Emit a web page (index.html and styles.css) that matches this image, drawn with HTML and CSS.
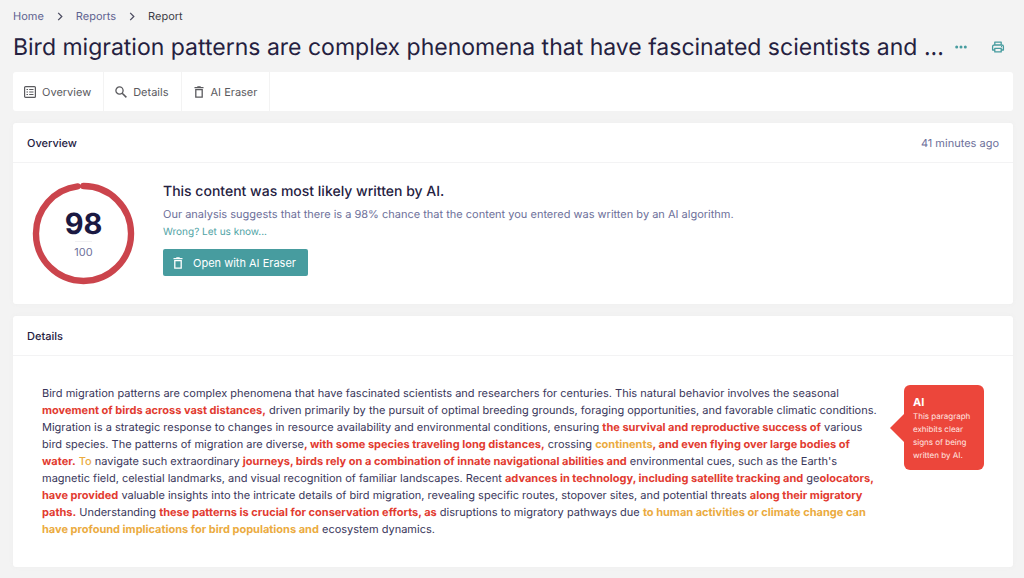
FILE: index.html
```html
<!DOCTYPE html>
<html lang="en">
<head>
<meta charset="utf-8">
<meta name="viewport" content="width=device-width, initial-scale=1">
<title>Report</title>
<link rel="stylesheet" href="styles.css">
</head>
<body>
<main class="page">
  <nav class="breadcrumb" aria-label="Breadcrumb">
    <a href="#">Home</a>
    <svg class="chevron" viewBox="0 0 6 10" aria-hidden="true"><path d="M1 1l4 4-4 4"/></svg>
    <a href="#">Reports</a>
    <svg class="chevron" viewBox="0 0 6 10" aria-hidden="true"><path d="M1 1l4 4-4 4"/></svg>
    <span class="current">Report</span>
  </nav>

  <header class="title-row">
    <h1 class="title">Bird migration patterns are complex phenomena that have fascinated scientists and ...</h1>
    <div class="actions">
      <button class="icon-button" type="button" aria-label="More">
        <svg width="14" height="14" viewBox="0 0 14 14" fill="currentColor"><circle cx="2.7" cy="7" r="1.5"/><circle cx="7" cy="7" r="1.5"/><circle cx="11.3" cy="7" r="1.5"/></svg>
      </button>
      <button class="icon-button" type="button" aria-label="Print">
        <svg width="14" height="14" viewBox="0 0 14 14" fill="none" stroke="currentColor" stroke-width="1.3" stroke-linejoin="round"><path d="M3.8 5V2.2h6.4V5M3.8 10H1.6V6.6Q1.6 5 3.2 5h7.6q1.6 0 1.6 1.6V10h-2.2M3.8 8.3h6.4v3.6H3.8z"/><path d="M10 6.7h1"/></svg>
      </button>
    </div>
  </header>

  <nav class="tabs" aria-label="Sections">
    <a class="tab" href="#overview">
      <svg class="tab-icon" viewBox="0 0 12 12" fill="none" stroke="currentColor"><rect x=".6" y=".6" width="10.8" height="10.8" rx="1" stroke-width="1.2"/><path d="M2.5 3.5H4M2.5 6H4M2.5 8.5H4M5.2 3.5h4.3M5.2 6h4.3M5.2 8.5h4.3" stroke-width="1.2"/></svg>
      Overview
    </a>
    <a class="tab" href="#details">
      <svg class="tab-icon" viewBox="0 0 12 12" fill="none" stroke="currentColor"><circle cx="4.5" cy="4.5" r="3.6" stroke-width="1.3"/><path d="M7.2 7.2l4.2 4.2" stroke-width="1.5"/></svg>
      Details
    </a>
    <a class="tab" href="#eraser">
      <svg class="tab-icon" viewBox="0 0 12 12" fill="none" stroke="currentColor" stroke-width="1.3"><path d="M1.5 1.6h9M4.3.9h3.4M2.8 3.6h6.4v7.6H2.8z"/></svg>
      AI Eraser
    </a>
  </nav>

  <section class="card" id="overview">
    <div class="card-head">
      <h2 class="card-title">Overview</h2>
      <span class="time">41 minutes ago</span>
    </div>
    <div class="overview">
      <div class="gauge">
        <svg class="ring" viewBox="0 0 104 104" aria-hidden="true">
          <circle cx="52" cy="52" r="48" fill="none" stroke="#cb444c" stroke-width="6.4" stroke-linecap="round" pathLength="100" stroke-dasharray="98 2" transform="rotate(-90 52 52)"/>
        </svg>
        <div class="score">
          <strong class="value">98</strong>
          <span class="rule"></span>
          <span class="total">100</span>
        </div>
      </div>
      <div class="verdict">
        <h3 class="verdict-title">This content was most likely written by AI.</h3>
        <p class="verdict-text">Our analysis suggests that there is a 98% chance that the content you entered was written by an AI algorithm.</p>
        <a class="feedback" href="#">Wrong? Let us know...</a>
        <button class="primary" type="button">
          <svg class="tab-icon" viewBox="0 0 12 12" fill="none" stroke="currentColor" stroke-width="1.3"><path d="M1.5 1.6h9M4.3.9h3.4M2.8 3.6h6.4v7.6H2.8z"/></svg>
          Open with AI Eraser
        </button>
      </div>
    </div>
  </section>

  <section class="card" id="details">
    <div class="card-head">
      <h2 class="card-title">Details</h2>
    </div>
    <div class="details">
      <p class="analysis">Bird migration patterns are complex phenomena that have fascinated scientists and researchers for centuries. This natural behavior involves the seasonal<br>
      <b class="ai">movement of birds across vast distances,</b> driven primarily by the pursuit of optimal breeding grounds, foraging opportunities, and favorable climatic conditions.<br>
      Migration is a strategic response to changes in resource availability and environmental conditions, ensuring <b class="ai">the survival and reproductive success of</b> various<br>
      bird species. The patterns of migration are diverse<b class="ai">, with some species traveling long distances,</b> crossing <b class="mixed">continents</b><b class="ai">, and even flying over large bodies of</b><br>
      <b class="ai">water.</b> <span class="mixed hint">To</span> navigate such extraordinary <b class="ai">journeys, birds rely on a combination of innate navigational abilities and</b> environmental cues, such as the Earth's<br>
      magnetic field, celestial landmarks, and visual recognition of familiar landscapes. Recent <b class="ai">advances in technology, including satellite tracking and</b> ge<b class="ai">olocators,</b><br>
      <b class="ai">have provided</b> valuable insights into the intricate details of bird migration, revealing specific routes, stopover sites, and potential threats <b class="ai">along their migratory</b><br>
      <b class="ai">paths.</b> Understanding <b class="ai">these patterns is crucial for conservation efforts, as</b> disruptions to migratory pathways due <b class="mixed">to human activities or climate change can</b><br>
      <b class="mixed">have profound implications for bird populations and</b> ecosystem dynamics.</p>
      <aside class="callout" role="tooltip">
        <strong class="callout-title">AI</strong>
        <p class="callout-text">This paragraph exhibits clear signs of being written by AI.</p>
      </aside>
    </div>
  </section>
</main>
</body>
</html>
```
FILE: styles.css
```css
* {
  box-sizing: border-box;
}

body {
  margin: 0;
  background: #f3f3f3;
  color: #25213f;
  font-family: Inter, "Liberation Sans", sans-serif;
  font-size: 11px;
  text-rendering: geometricPrecision;
}

h1, h2, h3, p {
  margin: 0;
}

a {
  color: inherit;
  text-decoration: none;
}

button {
  border: 0;
  font: inherit;
  cursor: pointer;
}

.page {
  display: flex;
  flex-direction: column;
  padding: 8px 11px 10px 13px;
}

.breadcrumb {
  display: flex;
  align-items: center;
  gap: 13px;
  line-height: 16px;
  color: #5e6290;
}

.chevron {
  width: 6px;
  height: 9px;
  fill: none;
  stroke: #4b4b60;
  stroke-width: 1.4;
}

.current {
  color: #3c3c46;
}

.title-row {
  display: flex;
  align-items: center;
  justify-content: space-between;
  padding: 7px 8px 9px 0;
}

.title {
  font-size: 23px;
  line-height: 32px;
  font-weight: 400;
  white-space: nowrap;
}

.actions {
  display: flex;
  gap: 23px;
}

.icon-button {
  display: flex;
  padding: 0;
  background: none;
  color: #479c9f;
}

.tabs {
  display: flex;
  height: 39px;
  margin-bottom: 12px;
  background: #fff;
  border-radius: 3px;
}

.tab {
  display: flex;
  align-items: center;
  gap: 6px;
  padding: 0 12px 0 11px;
  border-right: 1px solid #f3f3f3;
  color: #5a5a5e;
}

.tab-icon {
  width: 12px;
  height: 12px;
}

.card {
  margin-bottom: 12px;
  background: #fff;
  border-radius: 3px;
  box-shadow: 0 0 4px #ededed;
}

.card:last-child {
  margin-bottom: 0;
}

.card-head {
  display: flex;
  align-items: center;
  justify-content: space-between;
  height: 40px;
  padding: 0 14px;
  border-bottom: 1px solid #f3f3f4;
}

.card-title {
  font-size: 11px;
  font-weight: 500;
}

.time {
  color: #6d709a;
}

.overview {
  display: flex;
  align-items: flex-start;
  gap: 28px;
  padding: 19px;
}

.gauge {
  display: grid;
  place-items: center;
  width: 103px;
  height: 103px;
}

.ring,
.score {
  grid-area: 1 / 1;
}

.ring {
  width: 103px;
  height: 103px;
}

.score {
  display: flex;
  flex-direction: column;
  align-items: center;
  padding-top: 2px;
}

.value {
  font-size: 29px;
  line-height: 34px;
  font-weight: 700;
  color: #1b1942;
}

.rule {
  width: 17px;
  height: 1px;
  background: #f0f0f3;
}

.total {
  line-height: 20px;
  color: #6d709a;
}

.verdict {
  display: flex;
  flex-direction: column;
  align-items: flex-start;
}

.verdict-title {
  font-size: 14px;
  line-height: 20px;
  font-weight: 500;
}

.verdict-text {
  padding-top: 3px;
  line-height: 18px;
  color: #6d709a;
}

.feedback {
  padding-top: 1px;
  font-size: 10px;
  line-height: 16px;
  color: #4fa3a5;
}

.primary {
  display: flex;
  align-items: center;
  gap: 9px;
  height: 27px;
  margin-top: 9px;
  padding: 0 12px 0 9px;
  background: #479c9f;
  border-radius: 2px;
  color: #fff;
}

.details {
  position: relative;
  padding: 29px;
}

.analysis {
  line-height: 17px;
  color: #39365a;
  white-space: nowrap;
}

.ai {
  font-weight: 700;
  color: #e23b30;
}

.mixed {
  color: #ebab40;
}

.hint {
  font-weight: 500;
}

.callout {
  position: absolute;
  top: 29px;
  right: 29px;
  width: 80px;
  padding: 10px 9px 8px;
  background: #ec463b;
  border-radius: 6px;
  color: #fff;
}

.callout::before {
  content: "";
  position: absolute;
  top: 29px;
  left: -14px;
  border: solid transparent;
  border-width: 14px 14px 14px 0;
  border-right-color: #ec463b;
}

.callout-title {
  display: block;
  font-size: 11px;
  line-height: 15px;
}

.callout-text {
  font-size: 8px;
  line-height: 13px;
  color: #ffe6e2;
}
```
